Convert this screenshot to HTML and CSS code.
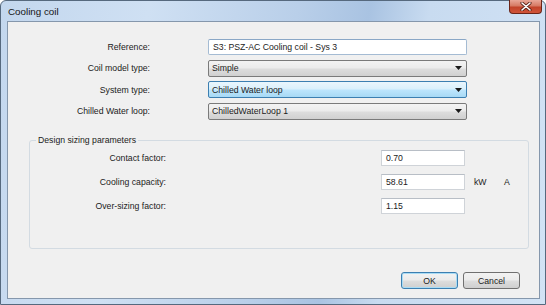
FILE: index.html
```html
<!DOCTYPE html>
<html>
<head>
<meta charset="utf-8">
<link rel="stylesheet" href="styles.css">
</head>
<body>
<div class="window">
  <div class="titlebar">
    <span class="title">Cooling coil</span>
    <div class="close">
      <svg width="12" height="9" viewBox="0 0 12 9"><path d="M2 1 L10 8 M10 1 L2 8" stroke="#5a2218" stroke-width="3.2" stroke-linecap="round"/><path d="M2 1 L10 8 M10 1 L2 8" stroke="#ffffff" stroke-width="1.6" stroke-linecap="round"/></svg>
    </div>
  </div>
  <div class="client">
    <div class="form">
      <div class="label">Reference:</div>
      <div class="input">S3: PSZ-AC Cooling coil - Sys 3</div>
      <div class="label">Coil model type:</div>
      <div class="select"><span>Simple</span><svg class="arrow" width="7" height="4" viewBox="0 0 7 4"><path d="M0 0 H7 L3.5 4 Z" fill="#1a1a1a"/></svg></div>
      <div class="label">System type:</div>
      <div class="select hot"><span>Chilled Water loop</span><svg class="arrow" width="7" height="4" viewBox="0 0 7 4"><path d="M0 0 H7 L3.5 4 Z" fill="#1a1a1a"/></svg></div>
      <div class="label">Chilled Water loop:</div>
      <div class="select"><span>ChilledWaterLoop 1</span><svg class="arrow" width="7" height="4" viewBox="0 0 7 4"><path d="M0 0 H7 L3.5 4 Z" fill="#1a1a1a"/></svg></div>
    </div>
    <fieldset class="group">
      <legend>Design sizing parameters</legend>
      <div class="params">
        <div class="label c1">Contact factor:</div>
        <div class="num c3">0.70</div>
        <div class="label c1">Cooling capacity:</div>
        <div class="num c3">58.61</div>
        <div class="unit c5">kW</div>
        <div class="unit c6">A</div>
        <div class="label c1">Over-sizing factor:</div>
        <div class="num c3">1.15</div>
      </div>
    </fieldset>
    <div class="buttons">
      <div class="btn default">OK</div>
      <div class="btn">Cancel</div>
    </div>
  </div>
</div>
</body>
</html>
```
FILE: styles.css
```css
html, body {
  margin: 0;
  padding: 0;
}
body {
  width: 546px;
  height: 305px;
  overflow: hidden;
  background: #ffffff;
  font-family: "Liberation Sans", Arial, sans-serif;
  font-size: 8.7px;
  color: #1b1b1b;
}
.window {
  width: 546px;
  height: 305px;
  box-sizing: border-box;
  border: 1px solid #56697e;
  border-radius: 6px 6px 0 0;
  background: linear-gradient(100deg, #c3d7ee 0%, #cfe0f3 25%, #b9cfe9 50%, #a9c3e2 62%, #c8dbf0 72%, #d2e3f5 100%);
  padding: 0 5px 5px 6px;
  display: flex;
  flex-direction: column;
}
.titlebar {
  height: 20px;
  display: flex;
  align-items: flex-start;
  justify-content: space-between;
}
.title {
  font-size: 9.8px;
  color: #151515;
  padding-left: 1px;
  margin-top: 5px;
}
.close {
  width: 33px;
  height: 14px;
  box-sizing: border-box;
  margin-top: -1px;
  margin-right: -2px;
  border: 1px solid #6a2519;
  border-top: none;
  border-radius: 0 0 4px 4px;
  background: linear-gradient(180deg, #e9a798 0%, #d67a64 45%, #c2432a 55%, #d0553a 100%);
  display: flex;
  align-items: center;
  justify-content: center;
}
.client {
  flex: 1;
  border: 1px solid #8597ac;
  background: #f0f0f0;
  display: flex;
  flex-direction: column;
}
.form {
  display: grid;
  grid-template-columns: 142px 259px;
  grid-template-rows: 16px 17px 17px 17px;
  column-gap: 58px;
  row-gap: 4.5px;
  margin-top: 17px;
}
.label {
  text-align: right;
  align-self: center;
  white-space: nowrap;
}
.input {
  box-sizing: border-box;
  background: #ffffff;
  border: 1px solid #a4bbd3;
  border-top-color: #8aa7c6;
  border-radius: 2px;
  padding: 0 4px;
  line-height: 14px;
  white-space: nowrap;
}
.select {
  box-sizing: border-box;
  border: 1px solid #7a7a7a;
  border-radius: 2px;
  background: linear-gradient(180deg, #f3f3f3 0%, #ebebeb 48%, #dddddd 52%, #d0d0d0 100%);
  display: flex;
  align-items: center;
  justify-content: space-between;
  padding: 0 4px 0 3px;
  white-space: nowrap;
}
.select.hot {
  border-color: #3c7fb1;
  background: linear-gradient(180deg, #eaf6fd 0%, #d9f0fc 48%, #bee6fd 52%, #a7d9f5 100%);
}
.arrow {
  display: block;
}
.group {
  margin: 15px 10px 0 21px;
  padding: 0 0 34px 0;
  border: 1px solid #d3dbe2;
  border-radius: 3px;
  min-width: 0;
}
.group legend {
  padding: 0 2px;
  margin-left: 6px;
  line-height: 11px;
}
.params {
  display: grid;
  grid-template-columns: 136px 215px 84px 9px 30px auto;
  grid-auto-rows: 16px;
  row-gap: 8px;
  margin-top: 4.5px;
}
.c1 { grid-column: 1; }
.c3 { grid-column: 3; }
.c5 { grid-column: 5; }
.c6 { grid-column: 6; }
.num {
  box-sizing: border-box;
  background: #ffffff;
  border: 1px solid #cfd3d8;
  border-top-color: #b8bec6;
  padding: 0 4px;
  line-height: 14px;
}
.unit {
  align-self: center;
}
.buttons {
  margin-top: auto;
  margin-bottom: 9px;
  padding-right: 19px;
  display: flex;
  justify-content: flex-end;
  gap: 5px;
}
.btn {
  width: 57px;
  height: 17px;
  box-sizing: border-box;
  border: 1px solid #707070;
  border-radius: 3px;
  background: linear-gradient(180deg, #f2f2f2 0%, #ebebeb 48%, #dddddd 52%, #cfcfcf 100%);
  display: flex;
  align-items: center;
  justify-content: center;
}
.btn.default {
  border-color: #3c7fb1;
  box-shadow: inset 0 0 0 1px #a9dcf5;
}
```
